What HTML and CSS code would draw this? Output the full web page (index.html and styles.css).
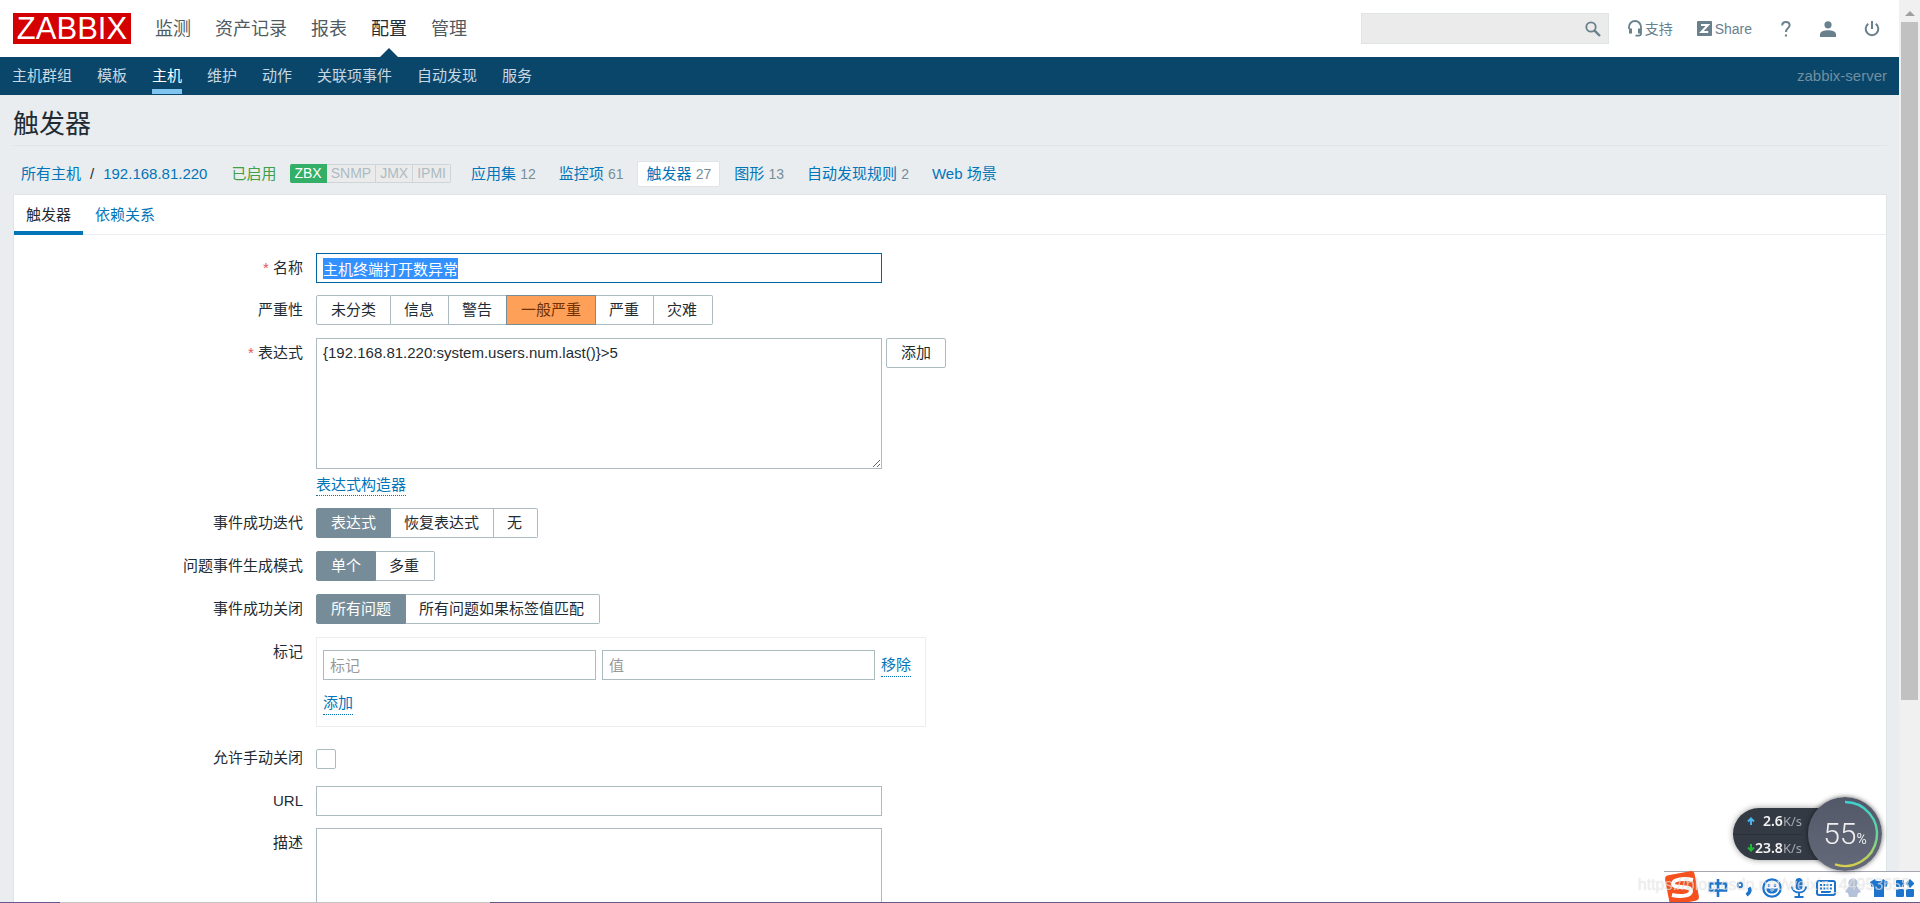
FILE: index.html
```html
<!DOCTYPE html>
<html lang="zh-CN">
<head>
<meta charset="utf-8">
<title>触发器</title>
<link rel="stylesheet" href="styles.css">
</head>
<body>
<div class="page">
  <header class="top">
    <a class="logo" href="#">ZABBIX</a>
    <nav class="menu">
      <a href="#">监测</a>
      <a href="#">资产记录</a>
      <a href="#">报表</a>
      <a href="#" class="current">配置</a>
      <a href="#">管理</a>
    </nav>
    <div class="tools">
      <form class="search">
        <input type="text" aria-label="搜索">
        <button type="button" aria-label="搜索">
          <svg width="16" height="16" viewBox="0 0 16 16" fill="none" stroke="#69808d"><circle cx="6" cy="6" r="4.7" stroke-width="1.8"/><path d="M9.6 9.6L15 15" stroke-width="2.4"/></svg>
        </button>
      </form>
      <a class="tool support" href="#">
        <svg width="14" height="17" viewBox="0 0 14 17" fill="none" stroke="#69808d" stroke-width="1.8"><path d="M1 9V7a6 6 0 0 1 12 0v6.2a2.4 2.4 0 0 1-2.4 2.4H7.5"/><path d="M2.5 8.5v5M11.5 8.5v5" stroke-width="3"/></svg>
        <span>支持</span>
      </a>
      <a class="tool share" href="#">
        <svg width="15" height="15" viewBox="0 0 15 15"><rect width="15" height="15" rx="1" fill="#69808d"/><path d="M4 4h7L4.400 11H11.200" fill="none" stroke="#fff" stroke-width="2"/></svg>
        <span>Share</span>
      </a>
      <a class="tool help" href="#" aria-label="帮助">
        <svg width="10" height="16" viewBox="0 0 10 16" fill="none" stroke="#69808d" stroke-width="2"><path d="M1.200 4.500C1.200 2.300 2.700 1 4.800 1s3.800 1.200 3.800 3.300c0 2.600-3.700 3.200-3.700 6.700M3.900 14.400h2.100"/></svg>
      </a>
      <a class="tool user" href="#" aria-label="用户">
        <svg width="16" height="16" viewBox="0 0 16 16" fill="#69808d"><circle cx="8" cy="3.800" r="3.600"/><path d="M0 16v-2.500C0 10.600 4 9.300 8 9.300s8 1.300 8 4.200V16z"/></svg>
      </a>
      <a class="tool power" href="#" aria-label="退出">
        <svg width="16" height="16" viewBox="0 0 16 16" fill="none" stroke="#69808d" stroke-width="2"><path d="M8 0v8M4.300 2.800a6.300 6.300 0 1 0 7.400 0"/></svg>
      </a>
    </div>
  </header>
  <nav class="subnav">
    <a href="#">主机群组</a>
    <a href="#">模板</a>
    <a href="#" class="current">主机</a>
    <a href="#">维护</a>
    <a href="#">动作</a>
    <a href="#">关联项事件</a>
    <a href="#">自动发现</a>
    <a href="#">服务</a>
    <span class="server">zabbix-server</span>
  </nav>
  <main>
    <h1>触发器</h1>
    <div class="crumbs">
      <div class="path"><a href="#">所有主机</a><span>/</span><a href="#">192.168.81.220</a></div>
      <span class="enabled">已启用</span>
      <div class="interfaces"><span class="on">ZBX</span><span>SNMP</span><span>JMX</span><span>IPMI</span></div>
      <a class="item" href="#">应用集 <sup>12</sup></a>
      <a class="item" href="#">监控项 <sup>61</sup></a>
      <a class="item selected" href="#">触发器 <sup>27</sup></a>
      <a class="item" href="#">图形 <sup>13</sup></a>
      <a class="item" href="#">自动发现规则 <sup>2</sup></a>
      <a class="item" href="#">Web 场景</a>
    </div>
    <section class="panel">
      <div class="tabs">
        <a href="#" class="current">触发器</a>
        <a href="#">依赖关系</a>
      </div>
      <form class="form">
        <label class="required" for="name">名称</label>
        <div><input class="text wide" id="name" type="text" value="主机终端打开数异常" autofocus></div>

        <span class="label" id="l-sev">严重性</span>
        <div class="radios" role="radiogroup" aria-labelledby="l-sev">
          <label><input type="radio" name="sev">未分类</label>
          <label><input type="radio" name="sev">信息</label>
          <label><input type="radio" name="sev">警告</label>
          <label class="average"><input type="radio" name="sev" checked>一般严重</label>
          <label><input type="radio" name="sev">严重</label>
          <label><input type="radio" name="sev">灾难</label>
        </div>

        <label class="required" for="expr">表达式</label>
        <div>
          <div class="with-button">
            <textarea class="text wide expression" id="expr">{192.168.81.220:system.users.num.last()}&gt;5</textarea>
            <button class="button" type="button">添加</button>
          </div>
          <div class="builder"><a class="dotted" href="#">表达式构造器</a></div>
        </div>

        <span class="label" id="l-rec">事件成功迭代</span>
        <div class="radios" role="radiogroup" aria-labelledby="l-rec">
          <label><input type="radio" name="rec" checked>表达式</label>
          <label><input type="radio" name="rec">恢复表达式</label>
          <label><input type="radio" name="rec">无</label>
        </div>

        <span class="label" id="l-mode">问题事件生成模式</span>
        <div class="radios" role="radiogroup" aria-labelledby="l-mode">
          <label><input type="radio" name="mode" checked>单个</label>
          <label><input type="radio" name="mode">多重</label>
        </div>

        <span class="label" id="l-close">事件成功关闭</span>
        <div class="radios" role="radiogroup" aria-labelledby="l-close">
          <label><input type="radio" name="close" checked>所有问题</label>
          <label><input type="radio" name="close">所有问题如果标签值匹配</label>
        </div>

        <span class="label">标记</span>
        <div class="tags">
          <div class="tag-row">
            <input class="text" type="text" placeholder="标记" aria-label="标记">
            <input class="text" type="text" placeholder="值" aria-label="值">
            <a class="dotted" href="#">移除</a>
          </div>
          <a class="dotted" href="#">添加</a>
        </div>

        <label for="manual">允许手动关闭</label>
        <div class="check"><input type="checkbox" id="manual"></div>

        <label for="url">URL</label>
        <div><input class="text wide" id="url" type="text"></div>

        <label for="desc">描述</label>
        <div><textarea class="text wide expression" id="desc"></textarea></div>
      </form>
    </section>
  </main>
</div>

<div class="scrollbar" aria-hidden="true">
  <svg width="10" height="5" viewBox="0 0 10 5"><path d="M5 0l5 5H0z" fill="#a0a0a0"/></svg>
  <div class="thumb"></div>
</div>

<div class="ime">
  <svg class="ime-logo" width="36" height="36" viewBox="0 0 36 36"><rect x="3" y="3" width="30" height="30" rx="4" fill="#f4511e" transform="rotate(-11 18 18)"/><path d="M29 10C20 8 9 9 9 14c0 5 18 1 18 7 0 5-10 6-19 4" fill="none" stroke="#fff" stroke-width="4"/></svg>
  <svg width="20" height="20" viewBox="0 0 20 20" fill="none" stroke="#1d74cc" stroke-width="2.600"><path d="M2 5.500h16v7H2zM10 1v18"/></svg>
  <svg width="18" height="20" viewBox="0 0 18 20" fill="none" stroke="#1d74cc" stroke-width="2"><circle cx="4" cy="7" r="2.200"/><path d="M13 9.500c2 3 .5 5.500-2.500 7.500" stroke-width="3.400"/></svg>
  <svg width="20" height="20" viewBox="0 0 20 20" fill="none" stroke="#1d74cc" stroke-width="2.200"><circle cx="10" cy="10" r="8.700"/><path d="M5.500 11.500c1.500 4 7.500 4 9 0zM7 6v3M13 6v3"/></svg>
  <svg width="18" height="20" viewBox="0 0 18 20" fill="none" stroke="#1d74cc" stroke-width="2"><rect x="5.500" y="0" width="7" height="12" rx="3.500" fill="#1d74cc" stroke="none"/><path d="M2 8.500c0 8 14 8 14 0M9 14.500V19M4.500 19h9"/></svg>
  <svg width="20" height="16" viewBox="0 0 20 16"><rect x="1" y="1" width="18" height="14" rx="2" fill="#fff" stroke="#1d74cc" stroke-width="2"/><path d="M4 5h12M4 8.500h12" stroke="#1d74cc" stroke-width="2" stroke-dasharray="2 1.300"/><path d="M5 12h10" stroke="#1d74cc" stroke-width="2"/></svg>
  <svg width="18" height="20" viewBox="0 0 18 20" fill="#b4c2d9"><circle cx="9" cy="5" r="4.600"/><path d="M5 8h8l4 6-3 1-1 4H5l-1-4-3-1z"/></svg>
  <svg width="18" height="20" viewBox="0 0 18 20" fill="#1d74cc"><path d="M5 1c1 3 7 3 8 0l5 3-1.500 5-2.500-.5V19H4V8.500L1.500 9 0 4z"/></svg>
  <svg width="18" height="18" viewBox="0 0 18 18" fill="#1d74cc"><rect y="1" width="8" height="7" rx="1"/><rect y="10" width="8" height="8" rx="1"/><rect x="10" y="10" width="8" height="8" rx="1"/><path d="M14 0l4.500 4.500L14 9 9.500 4.500z"/></svg>
</div>
<div class="watermark">https://blog.csdn.net/weixin_44953658</div>
<div class="strip"></div>
<div class="meter">
  <div class="speeds">
    <div><svg width="8" height="8" viewBox="0 0 8 8" fill="none" stroke="#4bb4ec" stroke-width="2"><path d="M4 8V1M1 4.500l3-3 3 3"/></svg><b>2.6</b><span>K/s</span></div>
    <div><svg width="8" height="8" viewBox="0 0 8 8" fill="none" stroke="#22b83a" stroke-width="2"><path d="M4 0v7M1 3.500l3 3 3-3"/></svg><b>23.8</b><span>K/s</span></div>
  </div>
  <div class="gauge">
    <svg width="74" height="74" viewBox="0 0 74 74" fill="none" stroke-width="2.400"><defs><linearGradient id="arc" x1="0" y1="0" x2="0" y2="1"><stop offset="0" stop-color="#3fd0d0"/><stop offset=".5" stop-color="#62d69a"/><stop offset="1" stop-color="#d8cf4a"/></linearGradient></defs><path d="M37 5a32 32 0 1 1-10 62.400" stroke="url(#arc)"/></svg>
    <span class="value">55</span><span class="percent">%</span>
  </div>
</div>
<script src="app.js"></script>
</body>
</html>
```

FILE: styles.css
```css
* { box-sizing: border-box; }
body {
  margin: 0;
  height: 100vh;
  display: flex;
  overflow: hidden;
  background: #e9edf0;
  color: #1f2c33;
  font: 15px/20px "Liberation Sans", "Noto Sans CJK SC", sans-serif;
}
a { color: #0275b8; text-decoration: none; }
input, textarea, button { font: inherit; color: inherit; }
::selection { background: #3390ff; color: #fff; }
.page { flex: 1; min-width: 0; }

.top {
  display: flex;
  align-items: center;
  height: 57px;
  padding: 0 19px 0 13px;
  background: #fff;
}
.logo {
  width: 118px;
  height: 31px;
  background: #d40000;
  color: #fff;
  font-size: 31px;
  line-height: 32px;
  text-align: center;
}
.menu { display: flex; gap: 24px; margin-left: 24px; font-size: 18px; }
.menu a { position: relative; line-height: 58px; color: #4f5b62; }
.menu .current { color: #1f2c33; }
.menu .current::after {
  content: "";
  position: absolute;
  left: 50%;
  bottom: 0;
  margin-left: -10px;
  border: 10px solid transparent;
  border-top: 0;
  border-bottom-color: #0a466a;
}
.tools { display: flex; align-items: center; margin-left: auto; font-size: 14px; }
.search {
  display: flex;
  align-items: center;
  width: 248px;
  height: 31px;
  padding-right: 7px;
  border: 1px solid #dfe4e7;
  background: #ebebeb;
}
.search input { flex: 1; min-width: 0; border: 0; background: none; }
.search button { display: flex; padding: 0; border: 0; background: none; }
.tool { display: flex; align-items: center; gap: 3px; color: #69808d; }
.support { margin-left: 19px; }
.share { margin-left: 24px; }
.help { margin-left: 29px; }
.user { margin-left: 29px; }
.power { margin-left: 28px; }

.subnav {
  display: flex;
  gap: 25px;
  height: 38px;
  padding: 0 12px;
  background: #0a466a;
}
.subnav a { height: 37px; line-height: 37px; color: #c8d8e2; }
.subnav .current { color: #fff; border-bottom: 5px solid #80c4f0; }
.server { margin-left: auto; line-height: 37px; color: #708f9f; }

main { padding: 0 12px 0 13px; }
h1 {
  margin: 0;
  height: 51px;
  border-bottom: 1px solid #dfe4e7;
  font-size: 26px;
  font-weight: normal;
  line-height: 58px;
}
.crumbs { display: flex; align-items: center; height: 48px; padding: 7px 0 0 8px; }
.path { display: flex; gap: 9px; }
.enabled { margin-left: 24px; color: #429e47; }
.interfaces { display: flex; margin: 0 11px 0 14px; font-size: 14px; line-height: 17px; }
.interfaces span {
  padding: 0 4px;
  border: 1px solid #ccd5d9;
  border-left: 0;
  background: #ebebeb;
  color: #acbbc2;
}
.interfaces span:last-child { border-radius: 0 2px 2px 0; }
.interfaces .on {
  border-color: #34af67;
  border-radius: 2px 0 0 2px;
  background: #34af67;
  color: #fff;
}
.item { margin-right: 5px; padding: 2px 8px; border: 1px solid transparent; border-radius: 2px; }
.item.selected { border-color: #dfe4e7; background: #fff; }
.item sup { color: #768d99; font-size: 14px; line-height: 1; vertical-align: baseline; }

.panel { min-height: 100vh; border: 1px solid #dfe4e7; background: #fff; }
.tabs { display: flex; height: 40px; border-bottom: 1px solid #ebeef0; }
.tabs a { height: 40px; padding: 0 12px; line-height: 39px; }
.tabs .current { color: #1f2c33; border-bottom: 4px solid #0275b8; }

.form {
  display: grid;
  grid-template-columns: 289px 1fr;
  column-gap: 13px;
  row-gap: 12px;
  padding-top: 18px;
}
.form > label, .form > .label { text-align: right; line-height: 30px; }
.required::before { content: "* "; color: #e45959; }
.text {
  display: block;
  height: 30px;
  padding: 0 6px;
  border: 1px solid #acbbc2;
  border-radius: 0;
  background: #fff;
  outline: 0;
}
.text:focus { border-color: #02659f; }
.text::placeholder { color: #999; }
.wide { width: 566px; }
.expression { height: 131px; padding: 4px 6px; }
.with-button { display: flex; align-items: flex-start; gap: 4px; }
.button {
  height: 30px;
  padding: 0 14px;
  border: 1px solid #acbbc2;
  border-radius: 2px;
  background: #fff;
}
.builder { height: 27px; padding-top: 6px; }
.dotted { display: inline-block; line-height: 20px; border-bottom: 1px dotted #0275b8; }

.radios { display: flex; height: 31px; }
.radios label {
  position: relative;
  height: 30px;
  padding: 0 14px 0 13px;
  border: 1px solid #acbbc2;
  border-left-width: 0;
  line-height: 28px;
}
.radios label:first-child { padding-left: 14px; border-left-width: 1px; border-radius: 2px 0 0 2px; }
.radios label:last-child { padding-right: 15px; border-radius: 0 2px 2px 0; }
.radios input { position: absolute; opacity: 0; margin: 0; }
.radios label:has(:checked) { border-color: #768d99; background: #768d99; color: #fff; }
.radios .average:has(:checked) { padding: 0 14px; background: #ffa059; color: #733100; box-shadow: -1px 0 #768d99; }

.tags {
  width: 610px;
  height: 90px;
  margin-bottom: 4px;
  padding: 12px 6px;
  border: 1px solid #ebeef0;
}
.tag-row { display: flex; align-items: center; gap: 6px; margin-bottom: 12px; }
.tag-row .text { width: 273px; }
.tags .dotted { line-height: 22px; }
.check { display: flex; align-items: center; height: 31px; }
.check input {
  appearance: none;
  width: 20px;
  height: 20px;
  margin: 0;
  border: 1px solid #acbbc2;
  border-radius: 2px;
}

.scrollbar {
  display: flex;
  flex-direction: column;
  align-items: center;
  width: 21px;
  padding: 11px 2px 0;
  background: #f0f0f0;
}
.scrollbar svg { flex: none; }
.thumb { width: 17px; height: 76%; margin-top: 6px; background: #c1c1c1; }

.ime {
  position: fixed;
  right: 0;
  bottom: 0;
  display: flex;
  align-items: center;
  justify-content: space-between;
  width: 256px;
  height: 32px;
  padding: 0 6px 0 0;
  border-top: 1px solid #a5a8b2;
  background: #fff;
}
.ime svg { flex: none; }
.watermark {
  position: fixed;
  right: 10px;
  bottom: 8px;
  color: rgba(255, 255, 255, .6);
  font-size: 16px;
  text-shadow: 0 0 1px rgba(90, 90, 90, .3);
}
.strip {
  position: fixed;
  left: 0;
  right: 0;
  bottom: 0;
  height: 1px;
  background: linear-gradient(90deg, #6b5590 60px, #c4c4c4 60px, #c4c4c4 490px, #655a85 490px);
}
.meter { position: fixed; right: 38px; bottom: 32px; width: 149px; height: 74px; display: flex; align-items: center; }
.speeds {
  width: 110px;
  height: 52px;
  border-radius: 26px 0 0 26px;
  background: #343a44;
  box-shadow: 0 0 6px rgba(0, 0, 0, .4);
  color: #a4a8b0;
  font: 14px/26px "Noto Sans", sans-serif;
}
.speeds div { display: flex; align-items: center; justify-content: flex-end; width: 69px; height: 26px; }
.speeds div + div { border-top: 1px solid #2b3038; }
.speeds svg { margin-right: auto; margin-left: 14px; flex: none; }
.speeds b { color: #f2f2f2; font-weight: 600; }
.speeds span { font-size: 13px; }
.gauge {
  position: absolute;
  right: 0;
  top: 0;
  display: flex;
  align-items: baseline;
  justify-content: center;
  width: 74px;
  height: 74px;
  border-radius: 50%;
  background: linear-gradient(#535868, #646a7a);
  box-shadow: 0 0 5px rgba(0, 0, 0, .6);
  color: #eee;
  font-family: Roboto, sans-serif;
  font-weight: 300;
  line-height: 74px;
}
.gauge svg { position: absolute; left: 0; top: 0; }
.value { font-size: 30px; }
.percent { font-size: 14px; font-weight: 400; }
```

FILE: app.js
```js
const nameField = document.getElementById("name");
nameField.focus();
nameField.select();
```
